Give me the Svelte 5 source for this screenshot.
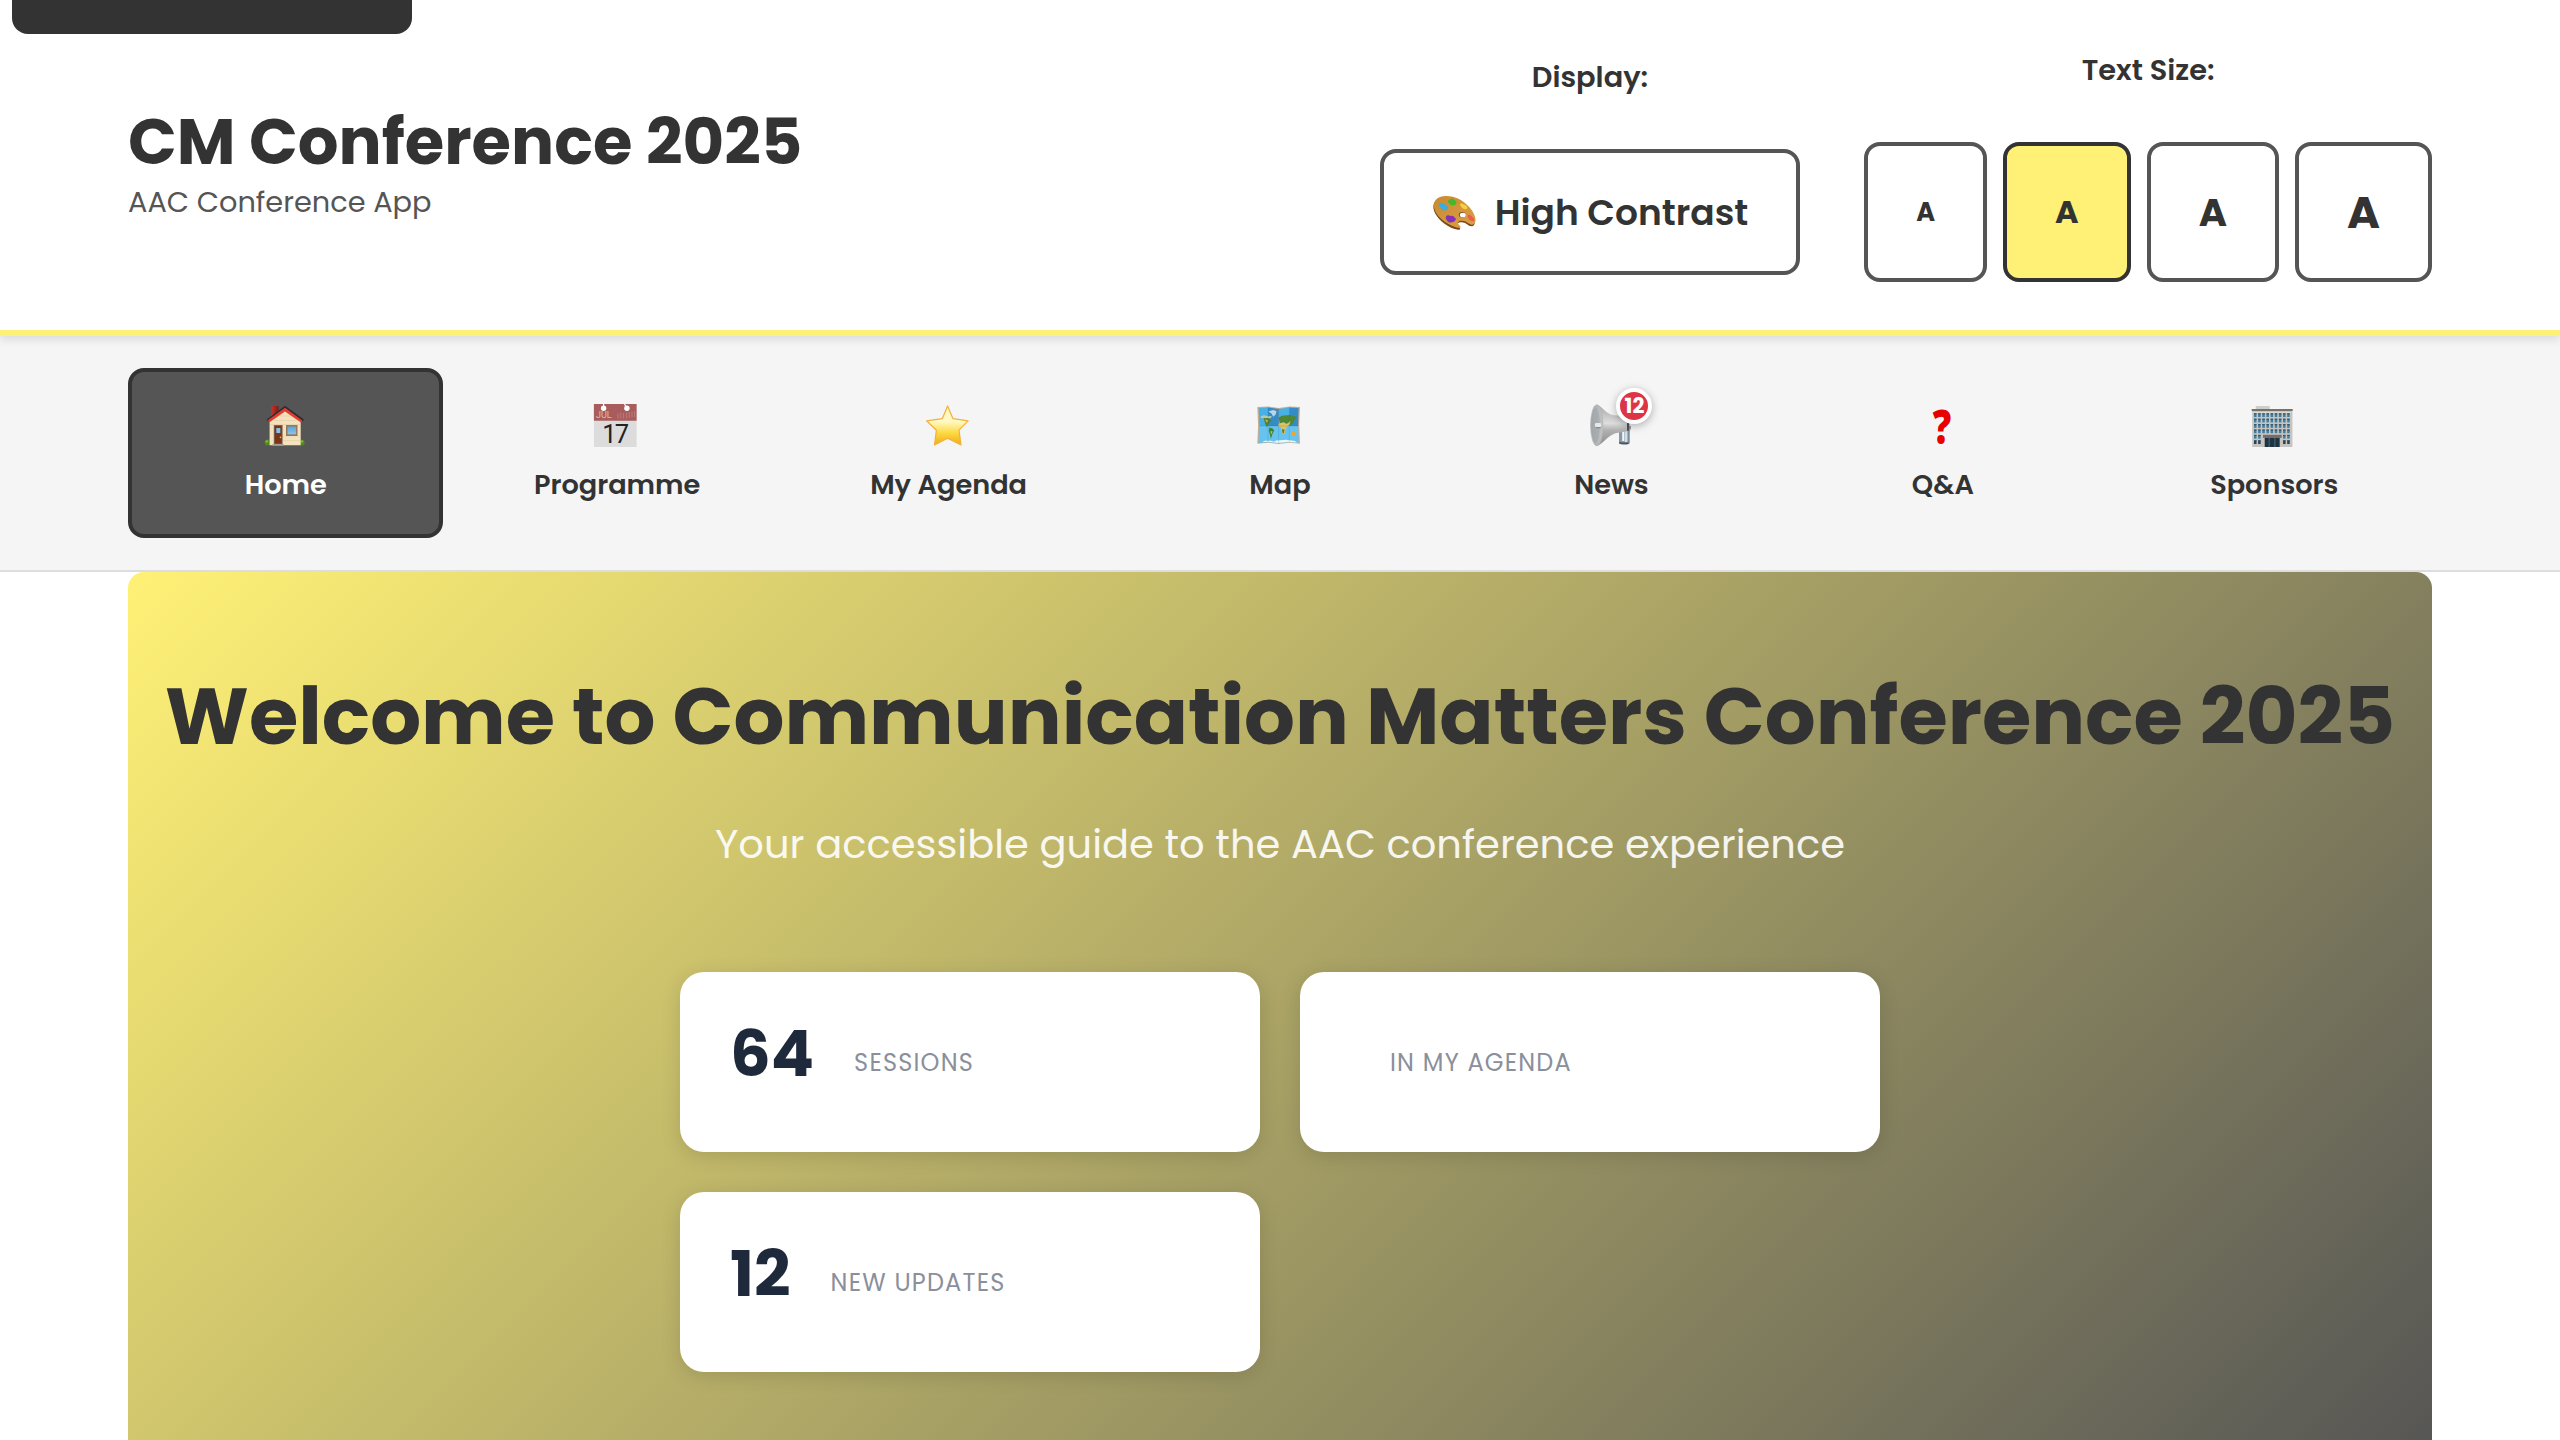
<script lang="ts">
  const nav = [
    { id: 'home', label: 'Home' },
    { id: 'programme', label: 'Programme' },
    { id: 'agenda', label: 'My Agenda' },
    { id: 'map', label: 'Map' },
    { id: 'news', label: 'News', badge: '12' },
    { id: 'qa', label: 'Q&A' },
    { id: 'sponsors', label: 'Sponsors' }
  ];
  const sizes = ['small', 'medium', 'large', 'xlarge'];
  const stats = [
    { value: '64', label: 'Sessions' },
    { value: '', label: 'In My Agenda' },
    { value: '12', label: 'New Updates' }
  ];
  let active = $state('home');
  let size = $state('medium');

  const cols = [0, 1, 2, 3, 4, 5, 6, 7, 8];
  const rows = [0, 1, 2, 3, 4, 5];
</script>

<div class="skip"></div>

<header>
  <div class="brand">
    <h1>CM Conference 2025</h1>
    <p>AAC Conference App</p>
  </div>
  <div class="controls">
    <div class="group">
      <span class="group-label">Display:</span>
      <button class="contrast">
        <svg viewBox="0 0 46 46" width="46" height="46" aria-hidden="true">
          <defs>
            <linearGradient id="wood" x1="0" y1="0" x2="1" y2="1">
              <stop offset="0" stop-color="#c98a2e" />
              <stop offset="1" stop-color="#dba04b" />
            </linearGradient>
          </defs>
          <path fill="#7a4a14" transform="translate(-.5 .9)" d="M1.9 15.5C3 9.500 8 6.800 14.500 7c7 .3 12 2.200 17.500 6.200C38.500 18 43 24.500 43.500 30.500c.2 4-1.700 6.500-4.700 5.700-2.800-.8-4.300-3.700-8.800-3.900-3.400 0-4.700 1.400-3.500 3.500 1 1.700 2.800 2.400 2 3.500-1.600 1.500-7.800-.3-12.800-3.600C7.500 30.500 1 22 1.900 15.500z" />
          <path fill="url(#wood)" d="M1.9 15.500C3 9.500 8 6.800 14.500 7c7 .3 12 2.200 17.500 6.200C38.500 18 43 24.500 43.500 30.500c.2 4-1.700 5.800-4.700 5-2.800-.8-4.300-3.500-8.800-3.700-3.400 0-4.700 1.400-3.500 3.500 1 1.700 2.800 2.400 2 3.200-1.600 1.200-7.800-.6-12.800-3.900C7.500 30 1 22 1.900 15.500z" />
          <ellipse cx="30.300" cy="25.700" rx="3.500" ry="2.700" fill="#7a4a14" />
          <ellipse cx="30.800" cy="26" rx="3" ry="2.300" fill="#fff" />
          <path fill="#36aee2" d="M7 14.500c1.700-1.400 3.500-.7 4.500.5 2 .3 4.300 2 4.700 3.700.2 1.900-1.400 2.700-2.900 2.400-2.300 1-4.300-.8-4.300-2.600-1.700-.8-3-2.500-2-4z" />
          <path fill="#44b828" d="M16 11.800c1.300-.2 1.800-2 3.800-2 1.700.2 2.400 1.200 3.600 1.900 1.300.8 1.300 2.600.2 3.700-1.300 1.100-4.300 1.300-5.300 0-.8-1-3.200-2-2.300-3.600z" />
          <path fill="#f4d03b" d="M28.500 14.500c1.700-.3 3.400.9 4.800 1.600 1.400.9 2.700 2.700 1.700 3.700-1.300 1-3.300.4-4.300-.5-1.300-1-3.500-3.600-2.200-4.800z" />
          <path fill="#8432b5" d="M14 27.500c1.200-1.700 3-1.400 4.400-.6 2-.6 3.900.1 4 1.700 1.700.6 2 2.200.8 3-1 1.600-4 2.400-5.900 1.800-1.900-.9-4.300-3.900-3.300-5.900z" />
          <path fill="#ee5a4c" d="M36 26c1.600-.7 3.300.7 4.500 2 1.500 1 2.500 3 1.700 4-1.200.8-3 0-4.200-1-1.400-1-3-3.700-2-5z" />
        </svg>
        High Contrast
      </button>
    </div>
    <div class="group">
      <span class="group-label">Text Size:</span>
      <div class="sizes">
        {#each sizes as s}
          <button class="size {s}" class:selected={size === s} onclick={() => (size = s)}>A</button>
        {/each}
      </div>
    </div>
  </div>
</header>

<nav>
  {#each nav as item}
    <button class="tab" class:active={active === item.id} onclick={() => (active = item.id)}>
      <span class="icon">
        {#if item.id === 'qa'}
          <span class="question">?</span>
        {:else}
          <svg viewBox="0 0 52 52" width="52" height="52" aria-hidden="true">
            {#if item.id === 'home'}
              <defs>
                <linearGradient id="chimney"><stop offset="0" stop-color="#c5352b" /><stop offset="1" stop-color="#7c1a16" /></linearGradient>
                <linearGradient id="wall" x1="0" y1="0" x2="1" y2="1"><stop offset="0" stop-color="#f3dfba" /><stop offset="1" stop-color="#f5e3c0" /></linearGradient>
                <linearGradient id="glass" x1="0" y1="0" x2="0" y2="1"><stop offset="0" stop-color="#5aa3d8" /><stop offset="1" stop-color="#8cc4ea" /></linearGradient>
              </defs>
              <circle cx="7.600" cy="42.400" r="3" fill="#4f8a1d" /><circle cx="6.800" cy="41.500" r="1.300" fill="#7cb636" />
              <circle cx="41.700" cy="42.400" r="3" fill="#4f8a1d" /><circle cx="42" cy="41.500" r="1.300" fill="#7cb636" />
              <path fill="url(#chimney)" d="M11.300 6h7.300v8l-7.300 6z" />
              <path fill="url(#wall)" d="M25 8.500 40.700 20v25.300H9.600V20z" />
              <path fill="none" stroke="#e0c99b" stroke-width=".5" d="M18 16h14M14 20.500h22M10 24.500h30M23 30h2M23 36h17M23 40.500h17" />
              <path fill="#2c2c30" d="m25 5.800 18.900 13.700-1.300 2.100L25 8.900 8 21.400l-1.300-2z" />
              <path fill="#e33d32" d="m25 7.700 17.300 12.700-1.400 2.100L25 11.400 9.500 22.300l-1.700-2z" />
              <path fill="#7b6551" d="M13.800 25h8.800v19h-8.800z" />
              <path fill="#7c3419" d="M14.800 26h6.900v17.500h-6.900z" />
              <path fill="#7fc4ef" d="M16.300 28h4v5h-4z" />
              <circle cx="20.500" cy="37.400" r=".8" fill="#e8bb55" />
              <path fill="#92795f" d="M26 25h11.500v11H26z" /><path fill="url(#glass)" d="M27.500 26.500h8.500v7.800h-8.500z" />
              <path fill="#a89d8c" d="M12.500 44h11v1.800h-11z" />
            {:else if item.id === 'programme'}
              <path fill="#dcdcdc" d="M2.900 4h42.700v43H2.900z" />
              <path fill="#a95c5c" d="M2.900 4h42.700v16.800H2.900z" />
              <path fill="none" stroke="#fff" stroke-width="1.200" d="M12.600 4v4M33.500 4q1 2 2.400 4" />
              <circle cx="12.600" cy="8.300" r="2.700" fill="#fff" /><circle cx="35.900" cy="8.300" r="2.700" fill="#fff" />
              <path stroke="#c48b8b" stroke-width=".7" d="M27 13.500v5M29.800 12.500v6M32.600 13v5.500M35.400 12.500v6M38.200 12v6M41 11.500v6M43.600 11v6" />
              <text x="5" y="18.300" class="month">JUL</text>
              <text x="11.300" y="42.700" class="day">17</text>
            {:else if item.id === 'agenda'}
              <defs>
                <linearGradient id="gold" x1="0" y1="0" x2="0" y2="1">
                  <stop offset="0" stop-color="#fff6bd" /><stop offset=".4" stop-color="#fff9c4" /><stop offset=".68" stop-color="#fcdb45" /><stop offset="1" stop-color="#f6a913" />
                </linearGradient>
              </defs>
              <path fill="url(#gold)" stroke="#f0b23c" stroke-width="1.200" stroke-linejoin="round" d="M24.600 5.900 30 18.700l15.100 2.100-9.100 9.400L38 45l-13.400-6.800L11.500 45l1.900-14.800-9.800-9.400L19.300 18.700z" />
            {:else if item.id === 'map'}
              <path fill="#c9ae92" d="m3.300 7 10.700-.6L24.700 8l10.600-1.600L46 7l-.8 18L46 43.800l-10.700-1L24.700 44l-10.600-1.200-10.800 1 .8-18.300z" />
              <path fill="#49b0e6" d="m4.700 8 9.300-.6v34.500l-9.200.9.600-17zM24.700 9l10.600-1.500V42l-10.600 1.300z" />
              <path fill="#358bc4" d="m14 7.400 10.700 1.600v17H14zM35.300 7.500 44.600 8l-.5 18h-8.800z" />
              <path fill="#66c3ef" d="M4.900 26h9.100v16l-9.200.8zM14 26h10.700v17.200L14 42zM24.700 26h10.600v16l-10.600 1.300zM35.300 26h8.900l.5 16.800-9.400-.8z" />
              <path fill="#bad6e4" d="M14.500 11.500 19 10l3.500 1-.8 3.500-2.500 2.200-1.500-3z" />
              <path fill="#b8c9a7" d="m6.500 16.500 3-1.200 5 1 3.500-.4-2 3-9-.8z" />
              <path fill="#4d8433" d="m9.500 18 6 .3 2 1.600-2 3-1.700 2.300-.8 2-1.700-3z" />
              <path fill="#d1b456" d="m11 19.500 3 .8-1 2.800z" />
              <path fill="#3f8430" d="m15.400 27.500 3.300 1 1.500 2-1.900 3.700-1.400 4.800-1-4.800-1.200-3.500z" /><path fill="#d8ba4a" d="m16.500 31 2 .5-1.300 3z" />
              <path fill="#4e8735" d="m24.500 18 3-2.300 8-.8 6 1.500 1.600 1.600-2.800 2.200-1.500 3.400-2.700 1.700-1.700-2.600-3 2-5-1z" />
              <path fill="#e2c064" d="m24.500 23.700 5-1.400 3.400 1.800 3.600-3-.6 3-4 3.800-1.400 6.300-2.600-1.500-.8-5.200-2.800-1.300z" />
              <path fill="#4f8b35" d="m28 29 2.500.5-.6 4-1.600-1z" /><path fill="#efa52f" d="m37 32.500 2.500-1.300 2.700 2-.7 2-3.300-.2z" />
              <path fill="#eef5f7" d="m8 42.200 3-1.500h6l3 1 2-1.300 10-.7 9 1.200 2 1.700-8-.7-10.300 1.200L14 41.800z" />
              <path fill="none" stroke="#2b6f9e" stroke-opacity=".35" stroke-width=".6" d="M14 7v35M24.700 8.500V43M35.300 7v35M5 26h39.300" />
            {:else if item.id === 'news'}
              <defs>
                <linearGradient id="horn" x1="0" y1="0" x2="0" y2="1">
                  <stop offset="0" stop-color="#a6a6a6" /><stop offset=".45" stop-color="#dedede" /><stop offset=".62" stop-color="#b0b0b0" /><stop offset="1" stop-color="#8d8d8d" />
                </linearGradient>
                <linearGradient id="bell"><stop offset="0" stop-color="#a3a7aa" /><stop offset="1" stop-color="#c2c4c5" /></linearGradient>
                <linearGradient id="grip"><stop offset="0" stop-color="#8fa3b2" /><stop offset=".4" stop-color="#eaf3f8" /><stop offset="1" stop-color="#6f8494" /></linearGradient>
              </defs>
              <path fill="#8599a7" d="M34 31h3.200v10h3V30h4.600v12.500c0 1.500-1.500 2-4 2-3.500 0-6.800-.6-6.800-2z" />
              <path fill="url(#grip)" d="M39.300 28.500h4.300v13.700h-4.300z" />
              <path fill="#4d545a" d="M34.200 41.700c2.500 1 7.300 1.200 9.400.5v1.500c-2.500 1-7.500.7-9.400-.3zM41 23h3.300v7.800H41z" />
              <path fill="#888" d="M44 26h1.800v3.500H44z" />
              <path fill="url(#horn)" d="M12 4.700C17 6 20.500 13.800 29 15.200l13 1v15l-9 1.600C23.500 34 19 43.500 12 46z" />
              <ellipse cx="11.800" cy="25.300" rx="6.200" ry="20.500" fill="url(#bell)" stroke="#b5b5b5" stroke-width=".7" />
              <ellipse cx="10.600" cy="25.300" rx="4.200" ry="17" fill="#9ea3a7" opacity=".5" />
              <path fill="#e8e8e8" d="M10.500 23h5q1.700 2 0 4h-5q-1.500-2 0-4z" /><path fill="#84898c" d="M10.700 27h5v1.200h-4z" />
            {:else}
              <path fill="#cfcdca" d="M7.700 6h14v4h-14z" /><path fill="#c5c4c0" d="M4.200 10.500h40.200V47H4.200z" />
              <path fill="#e5e3de" d="M5.500 12h37.500v.8H5.500z" />
              <path fill="#77716c" d="M3.700 9h41v2h-41z" />
              {#each rows as r}
                {#each cols as c}
                  {#if r < 4 || c < 2 || c > 6}
                    <rect x={6 + c * 4.15} y={13.3 + r * 5.4} width="2.500" height="3.700" fill={r === 5 ? '#2b4252' : '#437da0'} />
                    <rect x={6 + c * 4.15} y={13.3 + r * 5.4} width="2.500" height="1.100" fill="#35546a" />
                  {/if}
                {/each}
              {/each}
              <path fill="#746d6a" d="M15 34.800h18.700v3H15z" /><path fill="#1f3442" d="M16.700 37.800h15V47h-15z" />
              <path stroke="#587689" stroke-width=".8" d="M21.200 38v9M26.900 38v9" />
            {/if}
          </svg>
        {/if}
        {#if item.badge}<span class="badge">{item.badge}</span>{/if}
      </span>
      <span class="tab-label">{item.label}</span>
    </button>
  {/each}
</nav>

<main>
  <section class="hero">
    <h2>Welcome to Communication Matters Conference 2025</h2>
    <p>Your accessible guide to the AAC conference experience</p>
    <div class="stats">
      {#each stats as stat}
        <div class="card">
          <span class="value">{stat.value}</span>
          <span class="label">{stat.label}</span>
        </div>
      {/each}
    </div>
  </section>
</main>

<style>
  :global(body) {
    margin: 0;
    height: 1440px;
    overflow: hidden;
    background: #fff;
    color: #333;
    font-family: 'Poppins', 'Inter', sans-serif;
    font-size: 32px;
    line-height: 1.6;
  }
  h1, h2, p { margin: 0; }
  button {
    box-sizing: border-box;
    margin: 0;
    font-family: inherit;
    color: #333;
    cursor: pointer;
  }
  svg { display: block; flex: none; }

  .skip {
    position: absolute;
    z-index: 5;
    top: 0;
    left: 12px;
    width: 400px;
    height: 34px;
    border-radius: 0 0 16px 16px;
    background: #333;
  }

  header {
    position: relative;
    z-index: 2;
    box-sizing: border-box;
    height: 336px;
    padding: 0 128px;
    display: flex;
    align-items: center;
    justify-content: space-between;
    background: #fff;
    border-bottom: 6px solid #fff176;
    box-shadow: 0 4px 8px rgba(0, 0, 0, 0.1);
  }
  h1 {
    font-size: 64px;
    font-weight: 700;
    line-height: 74px;
  }
  .brand p {
    font-size: 28.8px;
    line-height: 46px;
    color: #555;
  }
  .controls {
    display: flex;
    align-items: center;
    gap: 64px;
  }
  .group {
    display: flex;
    flex-direction: column;
    align-items: center;
    gap: 48px;
  }
  .group-label {
    padding-bottom: 1px;
    font-size: 28.8px;
    font-weight: 600;
    line-height: 45px;
  }
  .contrast {
    display: flex;
    align-items: center;
    gap: 17px;
    height: 126px;
    padding: 0 48px;
    border: 4px solid #555;
    border-radius: 16px;
    background: #fff;
    font-size: 36px;
    font-weight: 600;
  }
  .sizes {
    display: flex;
    gap: 16px;
  }
  .size {
    height: 140px;
    padding: 0 48px;
    border: 4px solid #555;
    border-radius: 16px;
    background: #fff;
    font-weight: 700;
  }
  .small { font-size: 25.6px; }
  .medium { font-size: 32px; }
  .large { font-size: 38.4px; }
  .xlarge { font-size: 44.8px; }
  .size.selected {
    background: #fff176;
    border-color: #333;
  }

  nav {
    box-sizing: border-box;
    height: 236px;
    padding: 32px 128px;
    display: grid;
    grid-template-columns: repeat(7, 1fr);
    gap: 16px;
    background: #f5f5f5;
    border-bottom: 2px solid #ddd;
  }
  .tab {
    display: flex;
    flex-direction: column;
    align-items: center;
    justify-content: space-between;
    padding: 28px 0;
    border: 4px solid transparent;
    border-radius: 16px;
    background: transparent;
  }
  .tab.active {
    background: #555;
    border-color: #333;
    color: #fff;
  }
  .icon {
    position: relative;
    width: 52px;
    height: 52px;
  }
  .month {
    font: 400 9px 'Roboto', sans-serif;
    fill: #dcb9b9;
  }
  .day {
    font: 400 25.5px 'Roboto', sans-serif;
    letter-spacing: -2px;
    fill: #222;
  }
  .question {
    display: block;
    font: 800 47px/52px 'Open Sans', sans-serif;
    color: #e60000;
    transform: translateX(-1px) scaleX(0.78);
  }
  .badge {
    position: absolute;
    top: -12px;
    left: 31px;
    width: 28px;
    height: 28px;
    border: 4px solid #fff;
    border-radius: 50%;
    background: #dc3545;
    box-shadow: 0 2px 8px rgba(0, 0, 0, 0.3);
    color: #fff;
    font-size: 20.8px;
    font-weight: 700;
    line-height: 27px;
    text-align: center;
  }
  .tab-label {
    font-size: 27.2px;
    font-weight: 600;
    line-height: 43.5px;
  }

  main { padding: 0 128px; }
  .hero {
    box-sizing: border-box;
    height: 900px;
    padding: 80px 32px;
    border-radius: 16px;
    background: linear-gradient(135deg, #fff176 0%, #555 100%);
    text-align: center;
  }
  h2 {
    font-size: 80px;
    font-weight: 700;
    line-height: 128px;
    white-space: nowrap;
  }
  .hero p {
    margin-top: 32px;
    font-size: 40px;
    line-height: 64px;
    color: #fff;
    opacity: 0.9;
  }
  .stats {
    width: 1200px;
    margin: 96px auto 0;
    display: grid;
    grid-template-columns: 1fr 1fr;
    gap: 40px;
  }
  .card {
    box-sizing: border-box;
    height: 180px;
    padding: 50px;
    display: flex;
    align-items: flex-start;
    gap: 40px;
    border-radius: 24px;
    background: #fff;
    box-shadow: 0 4px 20px rgba(0, 0, 0, 0.13);
  }
  .value {
    font-size: 64px;
    font-weight: 700;
    line-height: 64px;
    color: #1e293b;
  }
  .label {
    margin-top: 22px;
    font-size: 24px;
    line-height: 38.4px;
    letter-spacing: 1.2px;
    text-transform: uppercase;
    color: #8a8f9b;
  }
</style>
